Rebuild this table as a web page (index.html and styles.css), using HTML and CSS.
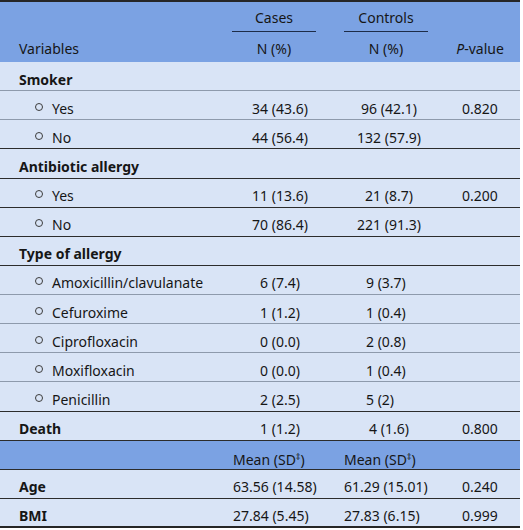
FILE: index.html
```html
<!DOCTYPE html>
<html>
<head>
<meta charset="utf-8">
<link rel="stylesheet" href="styles.css">
</head>
<body>
<table class="t">
  <colgroup>
    <col class="c-var"><col class="c-cases"><col class="c-ctrl"><col class="c-p">
  </colgroup>
  <thead>
    <tr class="h1">
      <th></th>
      <th><div class="ul ul-cases">Cases</div></th>
      <th><div class="ul ul-ctrl">Controls</div></th>
      <th></th>
    </tr>
    <tr class="h2">
      <th class="lbl">Variables</th>
      <th class="hc-cases">N (%)</th>
      <th class="hc-ctrl">N (%)</th>
      <th class="pc"><i>P</i>-value</th>
    </tr>
  </thead>
  <tbody>
    <tr class="gray"><td class="lbl grp">Smoker</td><td></td><td></td><td></td></tr>
    <tr class="gray"><td class="lbl"><span class="dot"></span>Yes</td><td class="cc">34 (43.6)</td><td class="cc">96 (42.1)</td><td class="pc">0.820</td></tr>
    <tr class="dark"><td class="lbl"><span class="dot"></span>No</td><td class="cc">44 (56.4)</td><td class="cc">132 (57.9)</td><td class="pc"></td></tr>
    <tr class="dark"><td class="lbl grp">Antibiotic allergy</td><td></td><td></td><td></td></tr>
    <tr class="dark"><td class="lbl"><span class="dot"></span>Yes</td><td class="cc">11 (13.6)</td><td class="cc">21 (8.7)</td><td class="pc">0.200</td></tr>
    <tr class="dark"><td class="lbl"><span class="dot"></span>No</td><td class="cc">70 (86.4)</td><td class="cc">221 (91.3)</td><td class="pc"></td></tr>
    <tr class="dark"><td class="lbl grp">Type of allergy</td><td></td><td></td><td></td></tr>
    <tr class="gray"><td class="lbl"><span class="dot"></span>Amoxicillin/clavulanate</td><td class="cc">6 (7.4)</td><td class="dl">9 (3.7)</td><td class="pc"></td></tr>
    <tr class="gray"><td class="lbl"><span class="dot"></span>Cefuroxime</td><td class="cc">1 (1.2)</td><td class="dl">1 (0.4)</td><td class="pc"></td></tr>
    <tr class="gray"><td class="lbl"><span class="dot"></span>Ciprofloxacin</td><td class="cc">0 (0.0)</td><td class="dl">2 (0.8)</td><td class="pc"></td></tr>
    <tr class="gray"><td class="lbl"><span class="dot"></span>Moxifloxacin</td><td class="cc">0 (0.0)</td><td class="dl">1 (0.4)</td><td class="pc"></td></tr>
    <tr class="dark"><td class="lbl"><span class="dot"></span>Penicillin</td><td class="cc">2 (2.5)</td><td class="dl">5 (2)</td><td class="pc"></td></tr>
    <tr class="dark"><td class="lbl grp">Death</td><td class="cc">1 (1.2)</td><td class="cc">4 (1.6)</td><td class="pc">0.800</td></tr>
    <tr class="dark sub"><td class="lbl"></td><td class="ml1">Mean (SD<sup>‡</sup>)</td><td class="ml2">Mean (SD<sup>‡</sup>)</td><td></td></tr>
    <tr class="dark"><td class="lbl grp">Age</td><td class="ml1">63.56 (14.58)</td><td class="ml2">61.29 (15.01)</td><td class="pc">0.240</td></tr>
    <tr class="last"><td class="lbl grp">BMI</td><td class="ml1">27.84 (5.45)</td><td class="ml2">27.83 (6.15)</td><td class="pc">0.999</td></tr>
  </tbody>
</table>
</body>
</html>
```
FILE: styles.css
```css
html, body {
  margin: 0;
  padding: 0;
  background: #ffffff;
}

.t {
  width: 520px;
  table-layout: fixed;
  border-collapse: separate;
  border-spacing: 0;
  border-top: 2px solid #262626;
  font-family: "Noto Sans", "DejaVu Sans", sans-serif;
  font-size: 14px;
  line-height: 19px;
  color: #161616;
  background: #d9e4f6;
}

.c-var { width: 222px; }
.c-cases { width: 116px; }
.c-ctrl { width: 102px; }
.c-p { width: 80px; }

thead th {
  background: #7ba2e3;
  font-weight: normal;
  padding: 0;
  white-space: nowrap;
}

.h1 th {
  height: 30px;
  vertical-align: bottom;
}

.ul {
  border-bottom: 1.5px solid #1d2c48;
  padding-bottom: 4px;
  text-align: center;
}

.ul-cases { margin: 0 22px 0 10px; }
.ul-ctrl { margin: 0 12px 0 6px; }

.h2 th {
  height: 27px;
  padding-top: 3px;
  vertical-align: middle;
  text-align: center;
}

.h2 th.lbl { text-align: left; }
.h2 .hc-cases { padding-right: 12px; }
.h2 .hc-ctrl { padding-right: 6px; }

tbody td {
  height: 22.125px;
  padding: 6px 0 0 0;
  vertical-align: middle;
  white-space: nowrap;
  border-bottom: 1px solid #8e9aac;
}

tbody tr.dark td { border-bottom-color: #2c2c2c; }

tbody tr.last td {
  border-bottom: 2px solid #262626;
  height: 21.125px;
}

.lbl { padding-left: 19px !important; text-align: left; }
.grp { font-weight: bold; }

.dot {
  display: inline-block;
  width: 8px;
  height: 8px;
  box-sizing: border-box;
  border: 1px solid #3c3c3c;
  border-radius: 50%;
  margin: 0 9px 0 16px;
  position: relative;
  top: -3px;
}

.cc { text-align: center; }
.pc { text-align: center; }
.dl { text-align: left; padding-left: 28px !important; }
.ml1 { text-align: left; padding-left: 11px !important; }
.ml2 { text-align: left; padding-left: 6px !important; }

tbody tr.sub td {
  background: #7ba2e3;
  padding-top: 9px;
  height: 19.125px;
}

sup {
  font-size: 9px;
  line-height: 0;
  vertical-align: 5px;
}
```
